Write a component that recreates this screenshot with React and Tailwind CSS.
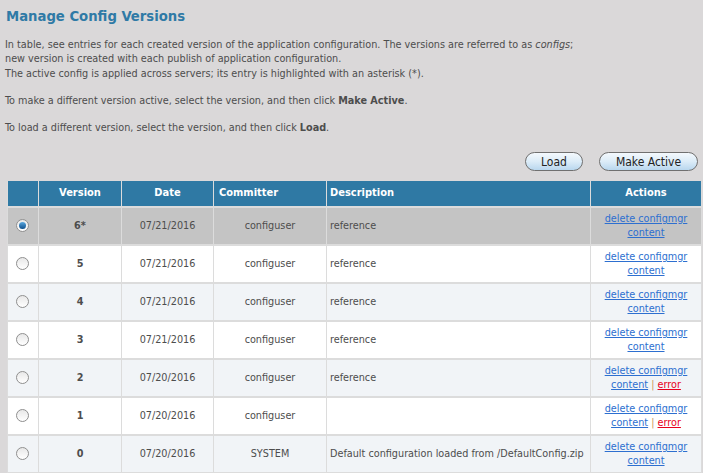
import React from 'react';

const rows = [
  { v: '6*', date: '07/21/2016', who: 'configuser', desc: 'reference', active: true },
  { v: '5', date: '07/21/2016', who: 'configuser', desc: 'reference' },
  { v: '4', date: '07/21/2016', who: 'configuser', desc: 'reference' },
  { v: '3', date: '07/21/2016', who: 'configuser', desc: 'reference' },
  { v: '2', date: '07/20/2016', who: 'configuser', desc: 'reference', error: true },
  { v: '1', date: '07/20/2016', who: 'configuser', desc: '', error: true },
  { v: '0', date: '07/20/2016', who: 'SYSTEM', desc: 'Default configuration loaded from /DefaultConfig.zip' },
];

function Radio({ checked }) {
  return (
    <span className="inline-flex h-[13px] w-[13px] items-center justify-center rounded-full border border-[#8f8f8f] bg-gradient-to-b from-[#e8e8e8] to-[#ffffff] align-middle">
      {checked && (
        <span className="h-[7px] w-[7px] rounded-full bg-gradient-to-b from-[#5aa9e0] to-[#0c4f8c]" />
      )}
    </span>
  );
}

function PillButton({ children, className }) {
  return (
    <button
      type="button"
      className={`h-[19px] rounded-full border border-[#707070] bg-gradient-to-b from-[#f4f9fd] via-[#dcecf8] to-[#b9d7ee] text-[12px] leading-none text-[#222] ${className}`}
    >
      {children}
    </button>
  );
}

const cell = 'border-x border-y-2 border-[#dcdcdc]';

export default function App() {
  return (
    <div className="h-[473px] w-[703px] overflow-hidden bg-[#dad8d9] font-['Tahoma','DejaVu_Sans_Condensed','DejaVu_Sans',sans-serif] text-[10.75px] text-[#4d4d4d]">
      <h1 className="px-[6px] pt-[6px] text-[14.7px] font-bold leading-[20px] text-[#2f7aa6]">
        Manage Config Versions
      </h1>

      <div className="mt-[12px] px-[5px] leading-[14px]">
        <p>
          In table, see entries for each created version of the application configuration. The versions are referred to as <i>configs</i>;
          <br />
          new version is created with each publish of application configuration.
        </p>
        <p className="mt-px">The active config is applied across servers; its entry is highlighted with an asterisk (*).</p>
        <p className="mt-[13px]">
          To make a different version active, select the version, and then click <b>Make Active</b>.
        </p>
        <p className="mt-[13px]">
          To load a different version, select the version, and then click <b>Load</b>.
        </p>
      </div>

      <div className="mt-[17px] flex justify-end gap-[16px] pr-[5px]">
        <PillButton className="w-[58px]">Load</PillButton>
        <PillButton className="w-[99px]">Make Active</PillButton>
      </div>

      <table className="ml-[7px] mt-[10px] w-[694px] table-fixed border-collapse">
        <colgroup>
          <col className="w-[31px]" />
          <col className="w-[83px]" />
          <col className="w-[92px]" />
          <col className="w-[113px]" />
          <col className="w-[264px]" />
          <col className="w-[111px]" />
        </colgroup>
        <thead>
          <tr className="h-[26px] bg-[#2f79a4] text-[11px] font-bold text-white">
            <th className={`${cell} border-t-0`} />
            <th className={`${cell} border-t-0 text-center`}>Version</th>
            <th className={`${cell} border-t-0 text-center`}>Date</th>
            <th className={`${cell} border-t-0 pl-[5px] text-left`}>Committer</th>
            <th className={`${cell} border-t-0 pl-[3px] text-left`}>Description</th>
            <th className={`${cell} border-t-0 text-center`}>Actions</th>
          </tr>
        </thead>
        <tbody>
          {rows.map((r, i) => (
            <tr
              key={r.v}
              className={`h-[38px] ${r.active ? 'bg-[#c4c4c4]' : i % 2 === 0 ? 'bg-[#f1f4f7]' : 'bg-white'}`}
            >
              <td className={`${cell} pr-[2px] text-center`}>
                <Radio checked={r.active} />
              </td>
              <td className={`${cell} text-center font-bold`}>{r.v}</td>
              <td className={`${cell} text-center`}>{r.date}</td>
              <td className={`${cell} text-center`}>{r.who}</td>
              <td className={`${cell} pl-[3px] text-left`}>{r.desc}</td>
              <td className={`${cell} text-center leading-[14px]`}>
                <a href="#" className="text-[#2d6fd0] underline">
                  delete configmgr
                  <br />
                  content
                </a>
                {r.error && (
                  <>
                    {' '}
                    <span className="text-[#c8955a]">|</span>{' '}
                    <a href="#" className="text-[#e8001c] underline">
                      error
                    </a>
                  </>
                )}
              </td>
            </tr>
          ))}
        </tbody>
      </table>
    </div>
  );
}
